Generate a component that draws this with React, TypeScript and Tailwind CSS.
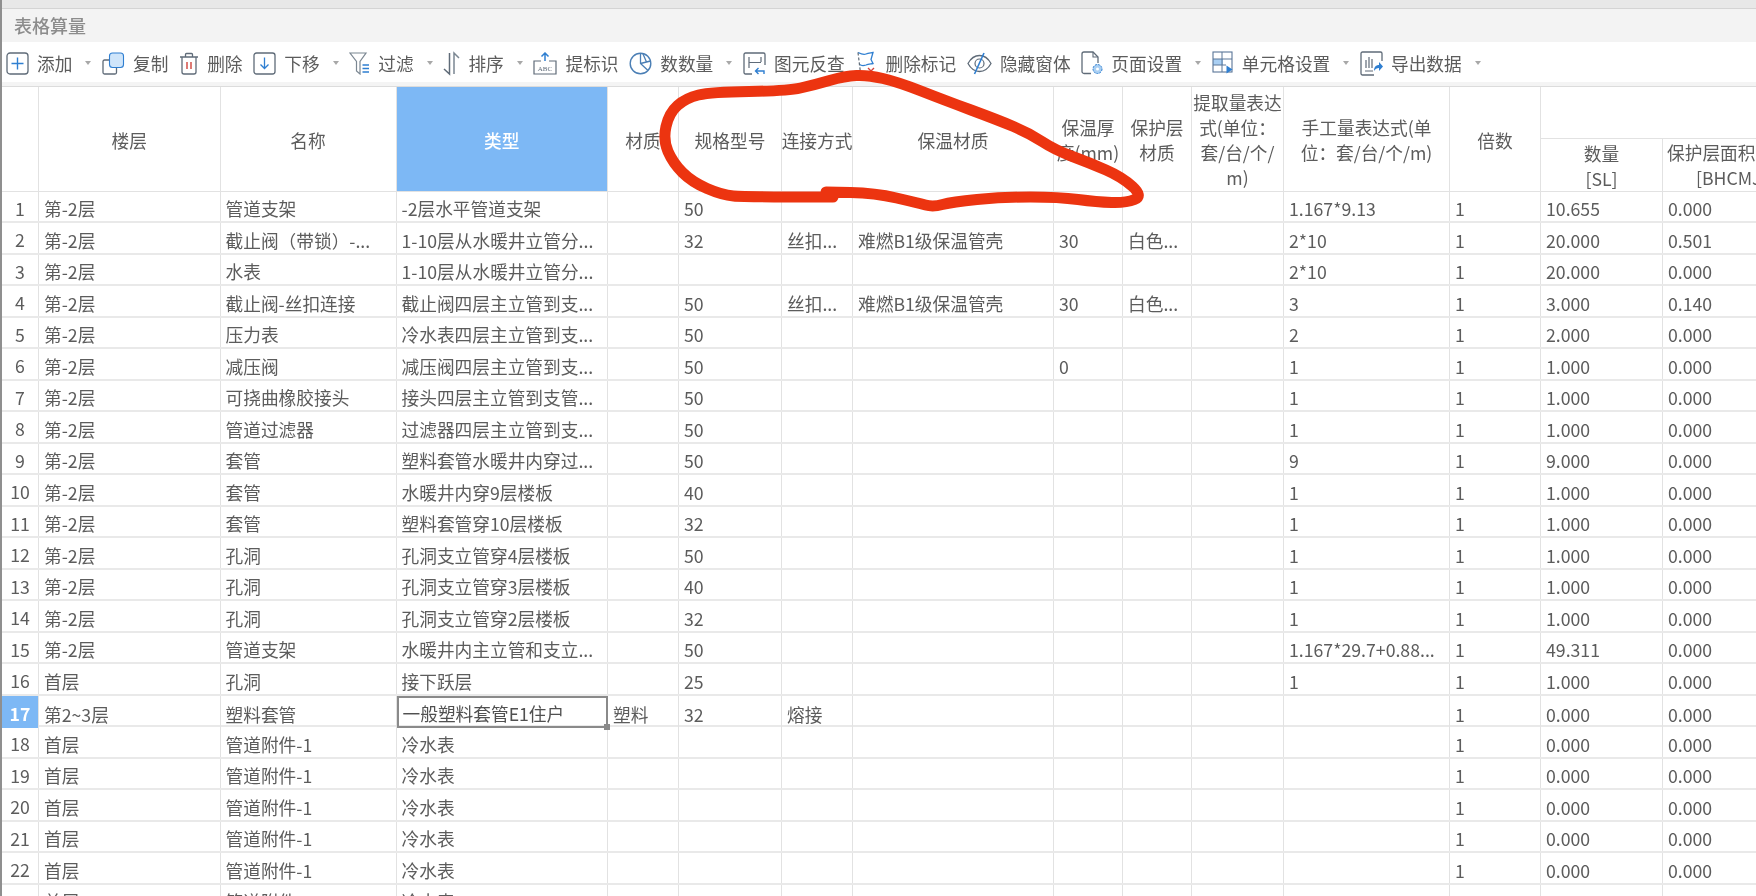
const FONT = "[font-family:'Noto_Sans_CJK_SC','Noto_Sans',sans-serif]";
const COLS =
  "grid grid-cols-[37px_181.5px_176px_211.5px_71px_103px_71px_201px_69px_69px_92px_166px_91px_122px_130px]";

const gray = "#5f6b78";
const blue = "#2f7fd1";

function AddIcon() {
  return (
    <svg width="23" height="23" viewBox="0 0 23 23" fill="none">
      <rect x="1" y="1" width="21" height="21" rx="3" stroke={gray} strokeWidth="1.3" />
      <path d="M11.5 5.5v12M5.5 11.5h12" stroke={blue} strokeWidth="1.4" />
    </svg>
  );
}
function CopyIcon() {
  return (
    <svg width="23" height="23" viewBox="0 0 23 23" fill="none">
      <path d="M7 8H2.5a1.5 1.5 0 0 0-1.5 1.5v11A1.5 1.5 0 0 0 2.5 22H13a1.5 1.5 0 0 0 1.5-1.5V16" stroke={gray} strokeWidth="1.3" />
      <rect x="7.5" y="1" width="14" height="14.5" rx="3" fill="#cfe5fa" stroke={blue} strokeWidth="1.1" />
    </svg>
  );
}
function TrashIcon() {
  return (
    <svg width="20" height="23" viewBox="0 0 20 23" fill="none">
      <path d="M1 5h18M6.5 5V2.5a1 1 0 0 1 1-1h5a1 1 0 0 1 1 1V5" stroke={gray} strokeWidth="1.3" />
      <path d="M3 5v15a2 2 0 0 0 2 2h10a2 2 0 0 0 2-2V5" stroke={gray} strokeWidth="1.3" />
      <path d="M8 10v7M12 10v7" stroke="#d0433c" strokeWidth="1.4" />
    </svg>
  );
}
function DownIcon() {
  return (
    <svg width="23" height="23" viewBox="0 0 23 23" fill="none">
      <rect x="1" y="1" width="21" height="21" rx="2.5" stroke={gray} strokeWidth="1.3" />
      <path d="M11.5 5.5v11M7.5 12.5l4 4 4-4" stroke={blue} strokeWidth="1.3" />
    </svg>
  );
}
function FilterIcon() {
  return (
    <svg width="21" height="23" viewBox="0 0 21 23" fill="none">
      <path d="M1 1h16L11 9.5V22L7.5 19V9.5Z" stroke="#7b8792" strokeWidth="1.2" />
      <path d="M13.5 13H20M13.5 16.5H20M13.5 20H20" stroke={blue} strokeWidth="1.3" />
    </svg>
  );
}
function SortIcon() {
  return (
    <svg width="17" height="25" viewBox="0 0 17 25" fill="none">
      <path d="M6.5 2v21L1 18" stroke={gray} strokeWidth="1.5" />
      <path d="M11 23V2l5 5" stroke="#7b8792" strokeWidth="1.5" />
    </svg>
  );
}
function AbcIcon() {
  return (
    <svg width="24" height="23" viewBox="0 0 24 23" fill="none">
      <path d="M12 1v8M8.5 4.5 12 1l3.5 3.5" stroke={blue} strokeWidth="1.5" />
      <path d="M8 9H1v13h22V9h-7" stroke={gray} strokeWidth="1.2" />
      <text x="12" y="19" textAnchor="middle" fontSize="7" fontFamily="'Liberation Serif', serif" fill={gray}>
        ABC
      </text>
    </svg>
  );
}
function PieIcon() {
  return (
    <svg width="23" height="23" viewBox="0 0 23 23" fill="none">
      <circle cx="11.5" cy="11.5" r="10.3" stroke="#4b7fb5" strokeWidth="1.4" />
      <path d="M11.5 1.2V11.500l7.500 7M11.500 11.500 21.500 9M14 2l3.500 8" stroke="#4b7fb5" strokeWidth="1.3" />
    </svg>
  );
}
function ReverseIcon() {
  return (
    <svg width="23" height="23" viewBox="0 0 23 23" fill="none">
      <path d="M9 22H2.500A1.500 1.500 0 0 1 1 20.500v-18A1.500 1.500 0 0 1 2.500 1h18A1.500 1.500 0 0 1 22 2.500V13" stroke={gray} strokeWidth="1.3" />
      <path d="M6 5v11M6 10.500h12M18 5v5" stroke={gray} strokeWidth="1.2" />
      <path d="M21 22v-3h-8M15.500 16l-3 3 3 3" stroke={blue} strokeWidth="1.4" />
    </svg>
  );
}
function FlagIcon() {
  return (
    <svg width="22" height="24" viewBox="0 0 22 24" fill="none">
      <path d="M3 1.500c4 2 6 2.500 8 1.500s4-1 7-1.500l-2 7 2 4c-3 .5-5 .5-7 1.500-3 1-5 .5-6.500-.5" stroke={blue} strokeWidth="1.3" />
      <path d="M3 1.500 5.500 22" stroke={gray} strokeWidth="1.2" strokeDasharray="3 2" />
      <path d="m13 17 6 6M19 17l-6 6" stroke="#d0433c" strokeWidth="1.4" />
    </svg>
  );
}
function EyeIcon() {
  return (
    <svg width="25" height="23" viewBox="0 0 25 23" fill="none">
      <path d="M1 11.500C4 6 8 3.500 12.500 3.500S21 6 24 11.500C21 17 17 19.500 12.500 19.500S4 17 1 11.500Z" stroke={gray} strokeWidth="1.3" />
      <circle cx="12.500" cy="11.500" r="4.500" stroke={gray} strokeWidth="1.2" />
      <path d="M17 1 7.500 22" stroke={blue} strokeWidth="1.6" />
    </svg>
  );
}
function PageIcon() {
  return (
    <svg width="22" height="24" viewBox="0 0 22 24" fill="none">
      <path d="M10 22.500H3a2 2 0 0 1-2-2V3a2 2 0 0 1 2-2h9l5 5v6" stroke={gray} strokeWidth="1.3" />
      <path d="M12 1v5h5" stroke={gray} strokeWidth="1.1" />
      <circle cx="16.500" cy="18" r="4.500" fill="#a9cff3" stroke={blue} strokeWidth="1" strokeDasharray="2 1" />
      <circle cx="16.500" cy="18" r="1.500" fill="#fff" />
    </svg>
  );
}
function CellIcon() {
  return (
    <svg width="22" height="24" viewBox="0 0 22 24" fill="none">
      <rect x="1" y="8" width="10" height="6" fill="#a9cff3" />
      <rect x="1" y="1" width="19" height="20" stroke="#5a7698" strokeWidth="1.1" />
      <path d="M1 8h19M1 14h13M10 1v20" stroke="#5a7698" strokeWidth="1" />
      <path d="M14.500 14.500v8l6-4Z" fill={blue} />
    </svg>
  );
}
function ExportIcon() {
  return (
    <svg width="23" height="25" viewBox="0 0 23 25" fill="none">
      <path d="M14 24H2.500A1.500 1.500 0 0 1 1 22.500v-20A1.500 1.500 0 0 1 2.500 1h18A1.500 1.500 0 0 1 22 2.500V10" stroke={gray} strokeWidth="1.3" />
      <path d="M6 9v8M9 6v11M12 8v9M5 20h8" stroke={gray} strokeWidth="1.2" />
      <path d="M14 20c0-4 2-6 5-6v-3l4 4.500-4 4.500v-3c-2 0-4 1-5 3Z" fill={blue} />
    </svg>
  );
}

type Tool = { icon: React.ReactNode; label: string; caret?: boolean };

const tools: Tool[] = [
  { icon: <AddIcon />, label: "添加", caret: true },
  { icon: <CopyIcon />, label: "复制" },
  { icon: <TrashIcon />, label: "删除" },
  { icon: <DownIcon />, label: "下移", caret: true },
  { icon: <FilterIcon />, label: "过滤", caret: true },
  { icon: <SortIcon />, label: "排序", caret: true },
  { icon: <AbcIcon />, label: "提标识" },
  { icon: <PieIcon />, label: "数数量", caret: true },
  { icon: <ReverseIcon />, label: "图元反查" },
  { icon: <FlagIcon />, label: "删除标记" },
  { icon: <EyeIcon />, label: "隐藏窗体" },
  { icon: <PageIcon />, label: "页面设置", caret: true },
  { icon: <CellIcon />, label: "单元格设置", caret: true },
  { icon: <ExportIcon />, label: "导出数据", caret: true },
];

// floor, name, type, material, spec, joint, insulation, thickness, cover, extract, manual, times, qty, area
const rows: string[][] = [
  ["第-2层", "管道支架", "-2层水平管道支架", "", "50", "", "", "", "", "", "1.167*9.13", "1", "10.655", "0.000"],
  ["第-2层", "截止阀（带锁）-...", "1-10层从水暖井立管分...", "", "32", "丝扣...", "难燃B1级保温管壳", "30", "白色...", "", "2*10", "1", "20.000", "0.501"],
  ["第-2层", "水表", "1-10层从水暖井立管分...", "", "", "", "", "", "", "", "2*10", "1", "20.000", "0.000"],
  ["第-2层", "截止阀-丝扣连接", "截止阀四层主立管到支...", "", "50", "丝扣...", "难燃B1级保温管壳", "30", "白色...", "", "3", "1", "3.000", "0.140"],
  ["第-2层", "压力表", "冷水表四层主立管到支...", "", "50", "", "", "", "", "", "2", "1", "2.000", "0.000"],
  ["第-2层", "减压阀", "减压阀四层主立管到支...", "", "50", "", "", "0", "", "", "1", "1", "1.000", "0.000"],
  ["第-2层", "可挠曲橡胶接头", "接头四层主立管到支管...", "", "50", "", "", "", "", "", "1", "1", "1.000", "0.000"],
  ["第-2层", "管道过滤器", "过滤器四层主立管到支...", "", "50", "", "", "", "", "", "1", "1", "1.000", "0.000"],
  ["第-2层", "套管", "塑料套管水暖井内穿过...", "", "50", "", "", "", "", "", "9", "1", "9.000", "0.000"],
  ["第-2层", "套管", "水暖井内穿9层楼板", "", "40", "", "", "", "", "", "1", "1", "1.000", "0.000"],
  ["第-2层", "套管", "塑料套管穿10层楼板", "", "32", "", "", "", "", "", "1", "1", "1.000", "0.000"],
  ["第-2层", "孔洞", "孔洞支立管穿4层楼板", "", "50", "", "", "", "", "", "1", "1", "1.000", "0.000"],
  ["第-2层", "孔洞", "孔洞支立管穿3层楼板", "", "40", "", "", "", "", "", "1", "1", "1.000", "0.000"],
  ["第-2层", "孔洞", "孔洞支立管穿2层楼板", "", "32", "", "", "", "", "", "1", "1", "1.000", "0.000"],
  ["第-2层", "管道支架", "水暖井内主立管和支立...", "", "50", "", "", "", "", "", "1.167*29.7+0.88...", "1", "49.311", "0.000"],
  ["首层", "孔洞", "接下跃层", "", "25", "", "", "", "", "", "1", "1", "1.000", "0.000"],
  ["第2~3层", "塑料套管", "一般塑料套管E1住户", "塑料", "32", "熔接", "", "", "", "", "", "1", "0.000", "0.000"],
  ["首层", "管道附件-1", "冷水表", "", "", "", "", "", "", "", "", "1", "0.000", "0.000"],
  ["首层", "管道附件-1", "冷水表", "", "", "", "", "", "", "", "", "1", "0.000", "0.000"],
  ["首层", "管道附件-1", "冷水表", "", "", "", "", "", "", "", "", "1", "0.000", "0.000"],
  ["首层", "管道附件-1", "冷水表", "", "", "", "", "", "", "", "", "1", "0.000", "0.000"],
  ["首层", "管道附件-1", "冷水表", "", "", "", "", "", "", "", "", "1", "0.000", "0.000"],
  ["首层", "管道附件", "冷水表", "", "", "", "", "", "", "", "", "1", "0.000", "0.000"],
];

const marker: [number, number][] = [
  [833, 197], [745, 197], [722, 195], [692, 182], [673, 163], [663, 140], [669, 113], [686, 98],
  [711, 92], [787, 91], [814, 85], [845, 76], [868, 75], [898, 82], [944, 100], [998, 120],
  [1029, 133], [1055, 150], [1090, 163], [1122, 177], [1143, 196], [1126, 203], [1097, 202],
  [1059, 197], [1002, 197], [952, 202], [933, 207], [918, 203], [875, 193], [826, 192],
];

function markerPath() {
  let d = `M${marker[0][0]} ${marker[0][1]}`;
  for (let i = 1; i < marker.length - 1; i++) {
    const [x, y] = marker[i];
    const [nx, ny] = marker[i + 1];
    d += ` Q${x} ${y} ${(x + nx) / 2} ${(y + ny) / 2}`;
  }
  const last = marker[marker.length - 1];
  return d + ` L${last[0]} ${last[1]}`;
}

const head = "flex items-center justify-center text-center border-r border-b border-[#e2e2e2] whitespace-nowrap leading-[25px] pt-[3px]";

export default function App() {
  return (
    <div className={`relative h-[896px] w-[1756px] overflow-hidden bg-white text-[17.7px] text-[#5c5c5c] blur-[0.4px] ${FONT}`}>
      <div className="flex h-full flex-col border-l-2 border-[#8f8f8f]">
        <div className="h-[9px] shrink-0 border-b border-[#d4d4d4] bg-[#e8e8e8]" />
        <div className="flex h-[33px] shrink-0 items-center bg-[#f3f3f3] pl-3 text-[18px] font-medium text-[#8c8c8c]">
          表格算量
        </div>
        <div className="flex h-[40px] shrink-0 items-center gap-[10.7px] bg-white pl-[4px] pt-[3px]">
          {tools.map((t) => (
            <div key={t.label} className="flex items-center">
              {t.icon}
              <span className="ml-2 whitespace-nowrap">{t.label}</span>
              {t.caret && (
                <span className="ml-[13px] h-0 w-0 border-x-[3px] border-t-[4px] border-x-transparent border-t-[#a8a8a8]" />
              )}
            </div>
          ))}
        </div>
        <div className="h-[5px] shrink-0 border-b border-[#dcdcdc] bg-[#f4f4f4]" />

        <div className={`${COLS} h-[104.5px] shrink-0 grid-rows-[52px_52.5px]`}>
          <div className={`${head} row-span-2`} />
          <div className={`${head} row-span-2`}>楼层</div>
          <div className={`${head} row-span-2`}>名称</div>
          <div className={`${head} row-span-2 bg-[#7db8f5] font-medium text-white`}>类型</div>
          <div className={`${head} row-span-2`}>材质</div>
          <div className={`${head} row-span-2`}>规格型号</div>
          <div className={`${head} row-span-2`}>连接方式</div>
          <div className={`${head} row-span-2`}>保温材质</div>
          <div className={`${head} row-span-2`}>
            保温厚
            <br />
            度(mm)
          </div>
          <div className={`${head} row-span-2`}>
            保护层
            <br />
            材质
          </div>
          <div className={`${head} row-span-2`}>
            提取量表达
            <br />
            式(单位：
            <br />
            套/台/个/
            <br />
            m)
          </div>
          <div className={`${head} row-span-2`}>
            手工量表达式(单
            <br />
            位：套/台/个/m)
          </div>
          <div className={`${head} row-span-2`}>倍数</div>
          <div className="col-span-2 border-b border-[#e2e2e2]" />
          <div className={head}>
            数量
            <br />
            [SL]
          </div>
          <div className="whitespace-nowrap border-b border-[#e2e2e2] pl-[4px] pt-[1px] leading-[25px]">
            保护层面积
            <br />
            <span className="pl-[29px]">[BHCMJ]</span>
          </div>
        </div>

        {rows.map((row, i) => {
          const active = i === 16;
          return (
            <div key={i} className={`${COLS} h-[31.5px] shrink-0 border-b-2 border-[#e9e9e9]`}>
              <div
                className={
                  active
                    ? "flex items-center justify-center border-r border-[#e2e2e2] bg-[#7db8f5] pt-[3px] font-bold text-white"
                    : "flex items-center justify-center border-r border-[#e2e2e2] pt-[3px]"
                }
              >
                {i + 1}
              </div>
              {row.map((cell, c) => (
                <div
                  key={c}
                  className={
                    active && c === 2
                      ? "relative flex items-center whitespace-nowrap border-2 border-[#8a8a8a] pl-[4px] pt-[2px] text-[#505050]"
                      : "flex items-center overflow-hidden whitespace-nowrap border-r border-[#e2e2e2] pl-[5px] pt-[4px]"
                  }
                >
                  {cell}
                  {active && c === 2 && (
                    <span className="absolute -bottom-[4px] -right-[4px] h-[6px] w-[6px] bg-[#8a8a8a]" />
                  )}
                </div>
              ))}
            </div>
          );
        })}
      </div>

      <svg className="pointer-events-none absolute left-0 top-0" width="1756" height="896" fill="none">
        <path d={markerPath()} stroke="#ec3410" strokeWidth="11" strokeLinecap="round" strokeLinejoin="round" />
      </svg>
    </div>
  );
}
